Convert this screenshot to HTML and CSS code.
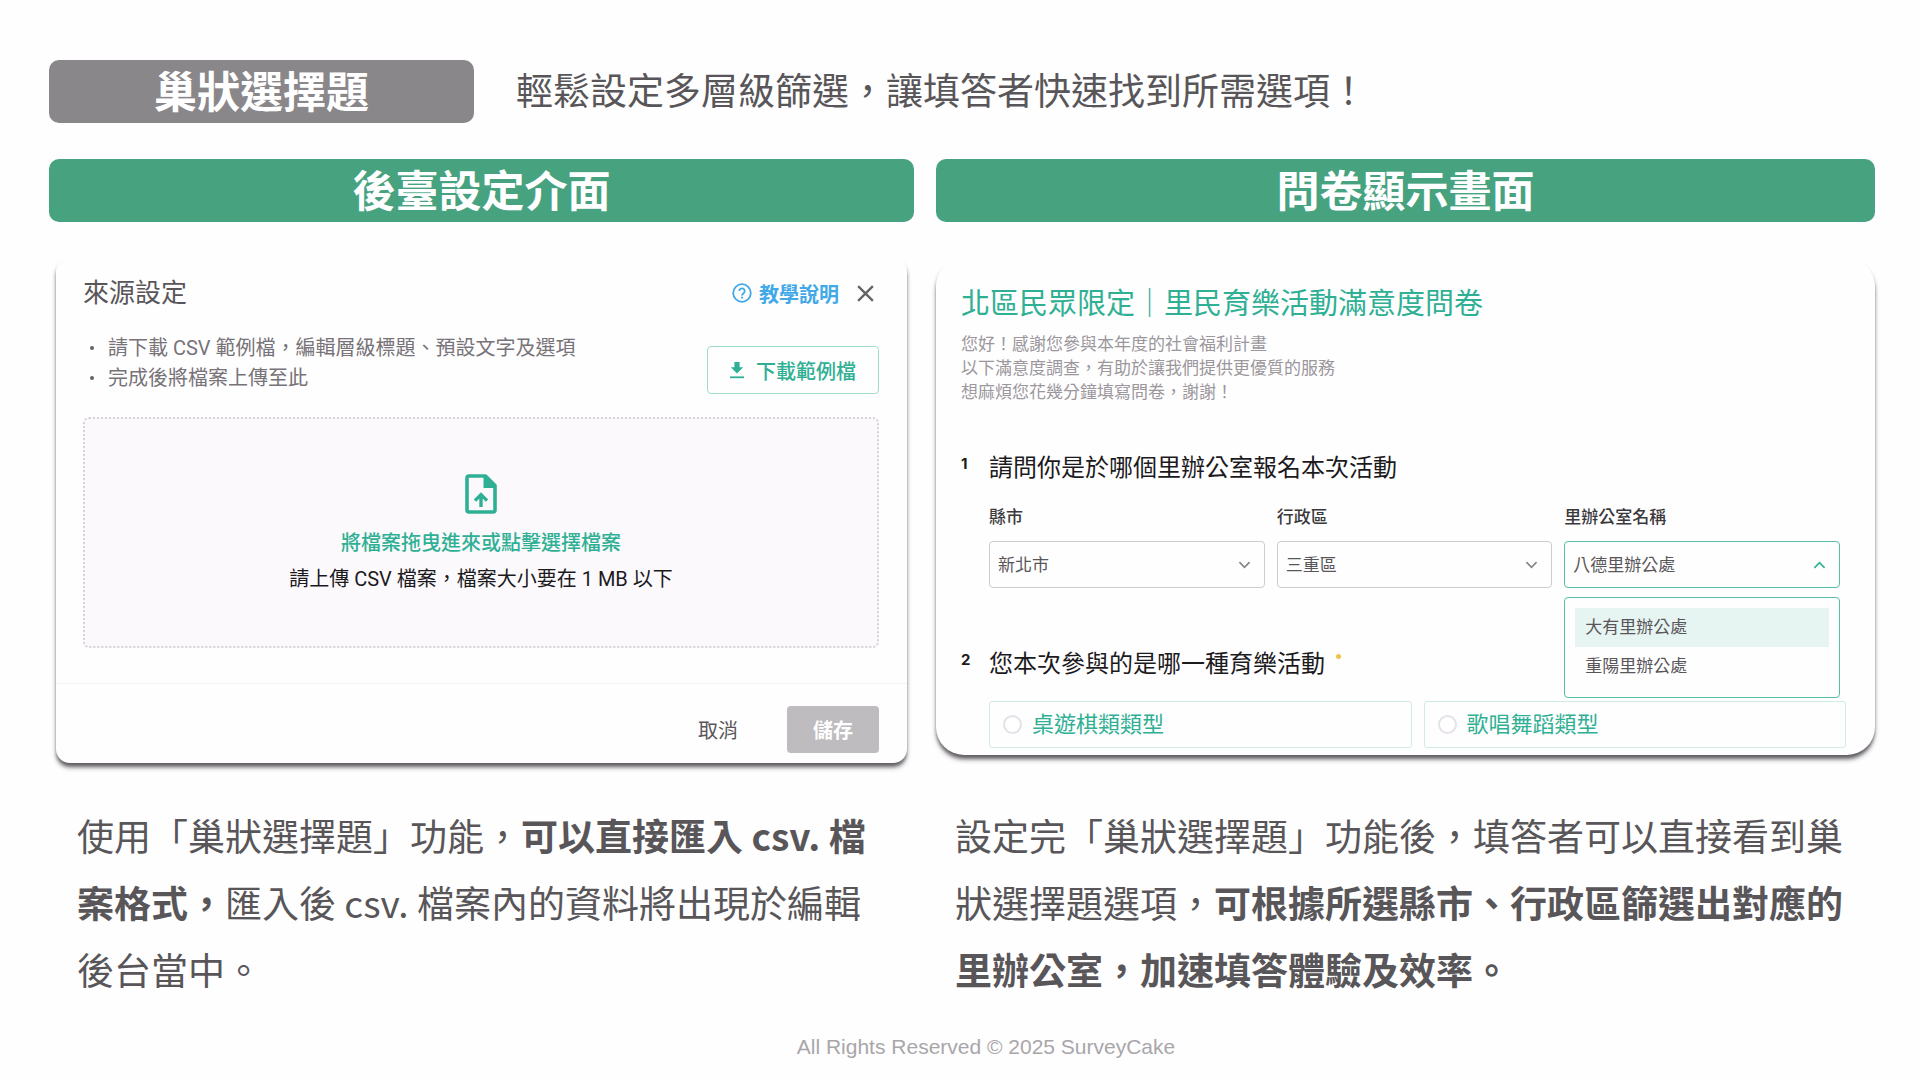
FILE: index.html
```html
<!DOCTYPE html>
<html lang="zh-Hant">
<head>
    <meta charset="UTF-8">
    <meta name="viewport" content="width=device-width, initial-scale=1.0">
    <title>巢狀選擇題</title>
    <link rel="stylesheet" href="styles.css">
</head>
<body>
    <div class="page">
        <header class="page-header">
            <h1 class="badge">巢狀選擇題</h1>
            <p class="tagline">輕鬆設定多層級篩選，讓填答者快速找到所需選項！</p>
        </header>

        <main class="columns">
            <h2 class="bar">後臺設定介面</h2>
            <h2 class="bar">問卷顯示畫面</h2>

            <!-- 來源設定 -->
            <section class="card settings">
                <div class="settings-header">
                    <h3 class="settings-title">來源設定</h3>
                    <a class="help-link" href="#">
                        <svg class="icon-help" viewBox="0 0 20 20" aria-hidden="true">
                            <circle cx="10" cy="10" r="8.8" fill="none" stroke="currentColor" stroke-width="1.8"/>
                            <path d="M7.3 8.1a2.7 2.7 0 1 1 4.3 2.1c-.9.7-1.6 1.1-1.6 2.2" fill="none" stroke="currentColor" stroke-width="1.8"/>
                            <circle cx="10" cy="14.7" r="1.1" fill="currentColor"/>
                        </svg>
                        教學說明
                    </a>
                    <button class="close-btn" type="button" aria-label="關閉">
                        <svg class="icon-close" viewBox="0 0 18 18" aria-hidden="true">
                            <path d="M1.2 1.2l15.6 15.6M16.8 1.2L1.2 16.8" fill="none" stroke="currentColor" stroke-width="2.4"/>
                        </svg>
                    </button>
                </div>

                <div class="settings-intro">
                    <ul class="tips">
                        <li>請下載 CSV 範例檔，編輯層級標題、預設文字及選項</li>
                        <li>完成後將檔案上傳至此</li>
                    </ul>
                    <button class="download-btn" type="button">
                        <svg class="icon-download" viewBox="0 0 14 18" aria-hidden="true">
                            <path d="M4.4 1h5.2v5.2h3.6L7 12.4.8 6.2h3.6z" fill="currentColor"/>
                            <path d="M0 15.4h14v1.8H0z" fill="currentColor"/>
                        </svg>
                        下載範例檔
                    </button>
                </div>

                <button class="dropzone" type="button">
                    <svg class="icon-file" viewBox="0 0 32 40" aria-hidden="true">
                        <path d="M4 2h16.5L30 11.5V36a2 2 0 0 1-2 2H4a2 2 0 0 1-2-2V4a2 2 0 0 1 2-2z" fill="none" stroke="currentColor" stroke-width="3.6" stroke-linejoin="round"/>
                        <path d="M18.5 2H21l9 9v3H18.5z" fill="currentColor"/>
                        <path d="M16 33V21M10 26.6l6-6 6 6" fill="none" stroke="currentColor" stroke-width="3.4"/>
                    </svg>
                    <span class="drop-title">將檔案拖曳進來或點擊選擇檔案</span>
                    <span class="drop-hint">請上傳 CSV 檔案，檔案大小要在 1 MB 以下</span>
                </button>

                <div class="settings-footer">
                    <button class="cancel-btn" type="button">取消</button>
                    <button class="save-btn" type="button">儲存</button>
                </div>
            </section>

            <!-- 問卷 -->
            <section class="card survey">
                <h3 class="survey-title">北區民眾限定｜里民育樂活動滿意度問卷</h3>
                <p class="survey-desc">您好！感謝您參與本年度的社會福利計畫<br>以下滿意度調查，有助於讓我們提供更優質的服務<br>想麻煩您花幾分鐘填寫問卷，謝謝！</p>

                <div class="question">
                    <span class="q-number">1</span>
                    <div class="q-body">
                        <h4 class="q-title">請問你是於哪個里辦公室報名本次活動</h4>
                        <div class="fields">
                            <div class="field">
                                <label for="city">縣市</label>
                                <div class="select-box">
                                    <select id="city"><option>新北市</option></select>
                                    <svg class="chevron" viewBox="0 0 14 8" aria-hidden="true"><path d="M1.5 1L7 6.5 12.5 1"/></svg>
                                </div>
                            </div>
                            <div class="field">
                                <label for="district">行政區</label>
                                <div class="select-box">
                                    <select id="district"><option>三重區</option></select>
                                    <svg class="chevron" viewBox="0 0 14 8" aria-hidden="true"><path d="M1.5 1L7 6.5 12.5 1"/></svg>
                                </div>
                            </div>
                            <div class="field">
                                <label for="office">里辦公室名稱</label>
                                <div class="select-box open">
                                    <select id="office"><option>八德里辦公處</option></select>
                                    <svg class="chevron" viewBox="0 0 14 8" aria-hidden="true"><path d="M1.5 7L7 1.5 12.5 7"/></svg>
                                    <ul class="menu" role="listbox" aria-label="里辦公室名稱">
                                        <li class="menu-item active" role="option" aria-selected="true">大有里辦公處</li>
                                        <li class="menu-item" role="option" aria-selected="false">重陽里辦公處</li>
                                    </ul>
                                </div>
                            </div>
                        </div>
                    </div>
                </div>

                <div class="question">
                    <span class="q-number">2</span>
                    <div class="q-body">
                        <h4 class="q-title">您本次參與的是哪一種育樂活動<span class="required"></span></h4>
                        <div class="choices">
                            <label class="choice"><input type="radio" name="activity">桌遊棋類類型</label>
                            <label class="choice"><input type="radio" name="activity">歌唱舞蹈類型</label>
                        </div>
                    </div>
                </div>
            </section>

            <p class="note note-left">使用「巢狀選擇題」功能，<strong>可以直接匯入 csv. 檔案格式，</strong>匯入後 csv. 檔案內的資料將出現於編輯後台當中。</p>
            <p class="note note-right">設定完「巢狀選擇題」功能後，填答者可以直接看到巢狀選擇題選項，<strong>可根據所選縣市、行政區篩選出對應的里辦公室，加速填答體驗及效率。</strong></p>
        </main>

        <footer class="page-footer">All Rights Reserved © 2025 SurveyCake</footer>
    </div>
</body>
</html>
```
FILE: styles.css
```css
:root {
    --green: #47a27f;
    --teal: #2fb094;
    --gray: #8a878b;
    --text: #59565a;
    --background: #fefefe;
}

* {
    box-sizing: border-box;
}

body {
    margin: 0;
    background: var(--background);
    color: var(--text);
    font-family: "Noto Sans CJK TC", sans-serif;
}

h1, h2, h3, h4, p, ul {
    margin: 0;
    padding: 0;
}

button, select {
    font-family: inherit;
    cursor: pointer;
}

.page {
    padding: 60px 45px 0 49px;
}

.page-header {
    display: flex;
    align-items: flex-start;
    gap: 42px;
    margin-bottom: 36px;
}

.badge,
.bar {
    border-radius: 10px;
    padding-bottom: 4px;
    color: #fff;
    font-size: 43px;
    font-weight: 700;
    line-height: 59px;
    text-align: center;
}

.badge {
    width: 425px;
    background: var(--gray);
}

.tagline {
    font-size: 37px;
    line-height: 59px;
}

.columns {
    display: grid;
    grid-template-columns: 865fr 939fr;
    column-gap: 22px;
    align-items: start;
}

.bar {
    background: var(--green);
}

.card {
    margin-top: 36px;
    background: var(--background);
    box-shadow: 0 5px 5px -1px rgba(60, 54, 62, 0.75), 0 3px 3px rgba(60, 54, 62, 0.3);
    font-family: Roboto, "Noto Sans CJK TC", sans-serif;
}

/* 來源設定 */
.settings {
    margin-left: 7px;
    margin-right: 7px;
    border-radius: 14px;
    padding: 18px 0 10px;
}

.settings-header {
    display: flex;
    align-items: center;
    padding: 0 33px 0 27px;
}

.settings-title {
    flex: 1;
    font-size: 26px;
    font-weight: 400;
    line-height: 34px;
}

.help-link {
    display: flex;
    align-items: center;
    gap: 7px;
    color: #42a9e8;
    font-size: 20px;
    font-weight: 700;
    text-decoration: none;
}

.icon-help {
    width: 20px;
    height: 20px;
}

.close-btn {
    display: flex;
    margin-left: 18px;
    border: 0;
    padding: 0;
    background: none;
    color: #656166;
}

.icon-close {
    width: 17px;
    height: 17px;
}

.settings-intro {
    display: flex;
    justify-content: space-between;
    padding: 23px 28px 0 27px;
}

.tips {
    list-style: none;
    color: #777378;
    font-size: 20px;
    line-height: 30px;
}

.tips li {
    display: flex;
    align-items: center;
    gap: 14px;
}

.tips li::before {
    content: "";
    width: 4px;
    height: 4px;
    margin-left: 7px;
    border-radius: 50%;
    background: #656166;
}

.download-btn {
    display: flex;
    align-items: center;
    gap: 12px;
    height: 48px;
    margin-top: 13px;
    border: 1px solid #9fdccd;
    border-radius: 4px;
    padding: 0 22px;
    background: none;
    color: var(--teal);
    font-size: 20px;
    font-weight: 500;
}

.icon-download {
    width: 14px;
    height: 18px;
}

.dropzone {
    display: flex;
    flex-direction: column;
    align-items: center;
    width: calc(100% - 55px);
    margin: 23px 28px 35px 27px;
    border: 2px dotted #d6d2d8;
    border-radius: 6px;
    padding: 55px 0 49px;
    background: #fbf9fc;
    font-size: 20px;
    line-height: 36px;
}

.icon-file {
    width: 32px;
    height: 40px;
    margin-bottom: 11px;
    color: var(--teal);
}

.drop-title {
    color: var(--teal);
    font-weight: 500;
}

.drop-hint {
    color: #1c1a1d;
}

.settings-footer {
    display: flex;
    justify-content: flex-end;
    gap: 20px;
    border-top: 1px solid #f4f1f5;
    padding: 22px 28px 0;
}

.cancel-btn,
.save-btn {
    height: 47px;
    border: 0;
    border-radius: 4px;
    font-size: 20px;
}

.cancel-btn {
    padding: 0 29px;
    background: none;
    color: var(--text);
}

.save-btn {
    padding: 0 26px;
    background: #bfbcc0;
    color: #fff;
    font-weight: 700;
}

/* 問卷 */
.survey {
    border-radius: 28px;
    padding: 25px 29px 7px 25px;
}

.survey-title {
    color: var(--teal);
    font-size: 29px;
    font-weight: 400;
    line-height: 42px;
}

.survey-desc {
    margin: 7px 0 46px;
    color: #9b979c;
    font-size: 17px;
    line-height: 24px;
}

.question {
    display: flex;
}

.q-number {
    width: 28px;
    color: #1c1a1d;
    font-family: Inter, sans-serif;
    font-size: 15px;
    font-weight: 700;
    line-height: 28px;
}

.q-body {
    flex: 1;
}

.q-title {
    display: flex;
    color: #1c1a1d;
    font-size: 24px;
    font-weight: 400;
    line-height: 36px;
}

.required {
    width: 5px;
    height: 5px;
    margin: 8px 0 0 11px;
    border-radius: 50%;
    background: #f3c24a;
}

.fields {
    display: grid;
    grid-template-columns: repeat(3, 1fr);
    gap: 12px;
    padding: 18px 6px 58px 0;
}

.field label {
    display: block;
    margin-bottom: 11px;
    color: #3c393d;
    font-size: 17px;
    font-weight: 500;
    line-height: 26px;
}

.select-box {
    position: relative;
}

.select-box select {
    display: block;
    width: 100%;
    height: 47px;
    appearance: none;
    border: 1px solid #cfccd0;
    border-radius: 4px;
    padding: 0 40px 0 8px;
    background: none;
    color: var(--text);
    font-size: 17px;
}

.chevron {
    position: absolute;
    top: 20px;
    right: 14px;
    width: 13px;
    height: 8px;
    fill: none;
    stroke: #88848a;
    stroke-width: 1.8;
    pointer-events: none;
}

.select-box.open select {
    border-color: #55bfa8;
}

.select-box.open .chevron {
    stroke: var(--teal);
}

.menu {
    position: absolute;
    top: 56px;
    left: 0;
    right: 0;
    list-style: none;
    border: 1px solid #55bfa8;
    border-radius: 4px;
    padding: 10px 10px 11px;
    background: var(--background);
    font-size: 17px;
    line-height: 39px;
}

.menu-item {
    padding: 0 10px;
}

.menu-item.active {
    background: #e6f4f2;
}

.choices {
    display: grid;
    grid-template-columns: 1fr 1fr;
    gap: 12px;
    margin-top: 19px;
}

.choice {
    display: flex;
    align-items: center;
    gap: 10px;
    height: 47px;
    border: 1px solid #d0ebe6;
    border-radius: 3px;
    padding: 0 13px;
    color: var(--teal);
    font-size: 22px;
    line-height: 32px;
}

.choice input {
    appearance: none;
    width: 19px;
    height: 19px;
    margin: 0;
    border: 2px solid #e6e1e9;
    border-radius: 50%;
    background: #fff;
}

/* 說明文字 */
.note {
    margin-top: 39px;
    font-size: 37px;
    line-height: 67px;
}

.note-left {
    padding: 0 35px 0 28px;
}

.note-right {
    padding: 0 19px;
}

.page-footer {
    margin-top: 30px;
    padding-left: 48px;
    color: #a9a6aa;
    font-family: "Liberation Sans", Arial, sans-serif;
    font-size: 21px;
    line-height: 28px;
    text-align: center;
}
```
